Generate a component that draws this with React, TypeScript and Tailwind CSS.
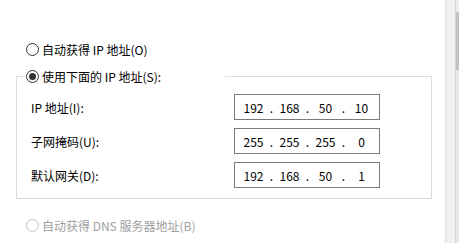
import React from "react";

const font = { fontFamily: '"Noto Sans CJK SC", "Noto Sans", sans-serif' };

function Radio({ checked = false, disabled = false }: { checked?: boolean; disabled?: boolean }) {
  return (
    <span
      className={
        "flex h-[13px] w-[13px] shrink-0 items-center justify-center rounded-full border bg-white " +
        (disabled ? "border-[#c4c4c4]" : "border-[#333333]")
      }
    >
      {checked && <span className="h-[7px] w-[7px] rounded-full bg-[#333333]" />}
    </span>
  );
}

function IpBox({ parts }: { parts: string[] }) {
  return (
    <div className="flex h-[26px] w-[146px] items-center border border-[#7a7a7a] bg-white pl-[6px] pt-[2px] text-[12px] text-black">
      {parts.map((p, i) => (
        <React.Fragment key={i}>
          <span className="w-[25px] text-center">{p}</span>
          {i < 3 && <span className="w-[11px] text-center">.</span>}
        </React.Fragment>
      ))}
    </div>
  );
}

const rows: { label: string; parts: string[] }[] = [
  { label: "IP 地址(I):", parts: ["192", "168", "50", "10"] },
  { label: "子网掩码(U):", parts: ["255", "255", "255", "0"] },
  { label: "默认网关(D):", parts: ["192", "168", "50", "1"] },
];

export default function App() {
  return (
    <div className="flex h-[243px] w-[459px] overflow-hidden bg-white text-[12px] text-black" style={font}>
      <div className="flex w-[445px] flex-col">
        <div className="mt-[41px] flex h-[17px] items-center gap-[3px] pl-[26px]">
          <Radio />
          <span>自动获得 IP 地址(O)</span>
        </div>
        <fieldset className="ml-[16px] mt-[10px] w-[416px] border border-[#dcdcdc] pb-[10px] pl-[14px] pt-[9px]">
          <legend className="ml-[-6px] flex h-[17px] w-[200px] items-center gap-[3px] bg-white pl-[1px]">
            <Radio checked />
            <span>使用下面的 IP 地址(S):</span>
          </legend>
          <div className="flex flex-col gap-[8px]">
            {rows.map((r) => (
              <div key={r.label} className="flex h-[26px] items-center">
                <span className="w-[203px] pt-[1px]">{r.label}</span>
                <IpBox parts={r.parts} />
              </div>
            ))}
          </div>
        </fieldset>
        <div className="mt-[18px] flex h-[17px] items-center gap-[3px] pl-[26px] text-[#a0a0a0]">
          <Radio disabled />
          <span>自动获得 DNS 服务器地址(B)</span>
        </div>
      </div>
      <div className="flex h-full w-[14px]">
        <div className="w-[10px] border-l border-[#e2e2e2] bg-[#f0f0f0]" />
        <div className="w-[1px] bg-[#d2d2d2]" />
        <div className="flex flex-1 flex-col bg-[#e6e6e6]">
          <div className="h-[12px] bg-[#ececec]" />
          <div className="h-[58px] bg-[#c2c2c2]" />
        </div>
      </div>
    </div>
  );
}
